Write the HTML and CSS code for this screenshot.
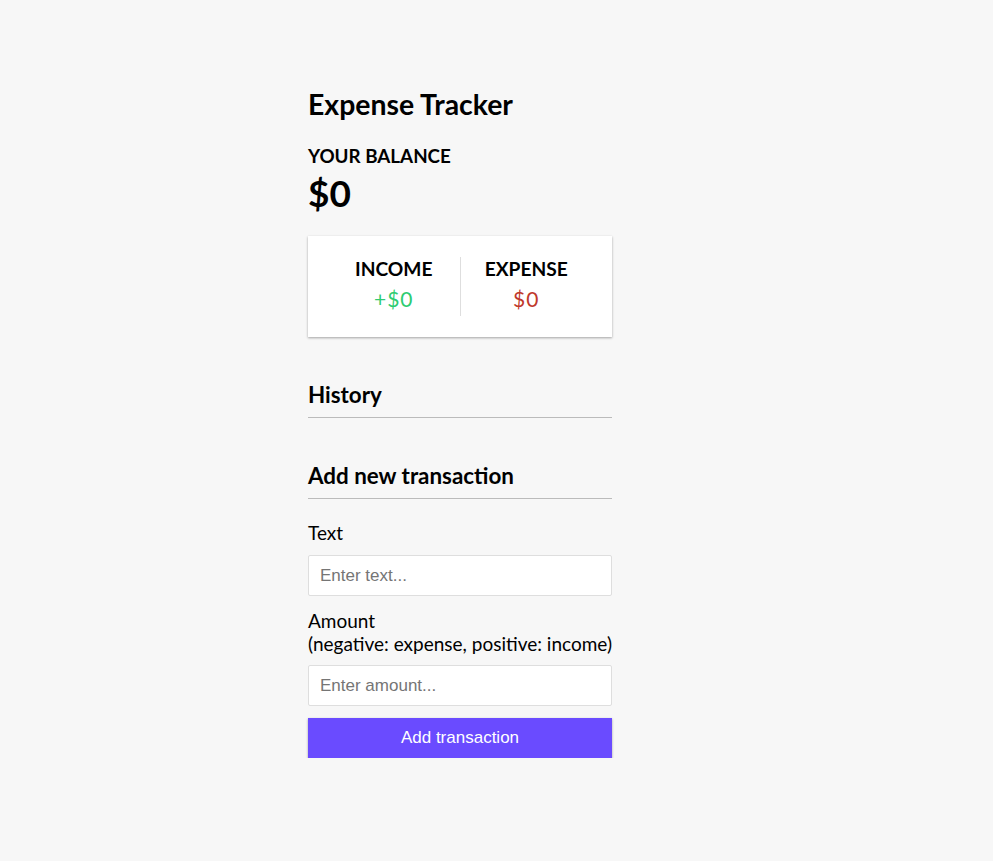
FILE: index.html
```html
<!DOCTYPE html>
<html lang="en">
<head>
<meta charset="UTF-8">
<title>Expense Tracker</title>
<link rel="stylesheet" href="styles.css">
</head>
<body>
  <div class="container">
    <h1 class="title">Expense Tracker</h1>
    <h4 class="balance-label">Your Balance</h4>
    <div class="balance">$0</div>

    <div class="inc-exp">
      <div class="inc-exp-col">
        <h4 class="col-label">Income</h4>
        <p class="money plus">+$0</p>
      </div>
      <div class="inc-exp-col">
        <h4 class="col-label">Expense</h4>
        <p class="money minus">$0</p>
      </div>
    </div>

    <h3 class="section-title">History</h3>
    <ul class="list"></ul>

    <h3 class="section-title">Add new transaction</h3>
    <form class="form">
      <label class="field-label label-text" for="text">Text</label>
      <input class="field-input" type="text" id="text" placeholder="Enter text...">
      <label class="field-label label-amount" for="amount">Amount <br>(negative: expense, positive: income)</label>
      <input class="field-input" type="number" id="amount" placeholder="Enter amount...">
      <button class="btn" type="button">Add transaction</button>
    </form>
  </div>
</body>
</html>
```
FILE: styles.css
```css
* {
  box-sizing: border-box;
}

body {
  margin: 0;
  background-color: #f7f7f7;
  font-family: "Lato", "Noto Sans", sans-serif;
  color: #000;
}

.container {
  width: 304px;
  margin-left: 308px;
  padding-top: 87px;
}

.title {
  margin: 0;
  font-size: 28.4px;
  line-height: 34px;
  font-weight: 700;
}

.balance-label {
  margin: 24px 0 0;
  font-size: 18.8px;
  line-height: 22px;
  text-transform: uppercase;
}

.balance {
  margin-top: 4px;
  font-size: 37px;
  line-height: 43px;
  font-weight: 700;
}

.inc-exp {
  display: flex;
  margin-top: 22px;
  height: 101px;
  padding: 21px 20px;
  background-color: #fff;
  box-shadow: 0 1px 3px rgba(0, 0, 0, 0.12), 0 1px 2px rgba(0, 0, 0, 0.24);
}

.inc-exp-col {
  flex: 1;
  text-align: center;
}

.inc-exp-col:first-child {
  border-right: 1px solid #dedede;
}

.col-label {
  margin: 0;
  font-size: 19.2px;
  line-height: 24px;
  text-transform: uppercase;
}

.money {
  margin: 5px 0 0;
  font-size: 21px;
  line-height: 25px;
  letter-spacing: 1px;
}

.money.plus {
  color: #2ecc71;
}

.money.minus {
  color: #c0392b;
}

.section-title {
  margin: 44px 0 0;
  padding-bottom: 9px;
  font-size: 22.4px;
  line-height: 27px;
  border-bottom: 1px solid #bbb;
}

.list {
  margin: 0;
  padding: 0;
  list-style: none;
}

.form {
  display: flex;
  flex-direction: column;
}

.field-label {
  display: block;
  font-size: 19px;
  line-height: 23px;
}

.label-text {
  margin: 22px 0 11px;
}

.label-amount {
  margin: 13px 0 10px;
}

.field-input {
  display: block;
  width: 100%;
  height: 41px;
  padding: 10px 11px;
  font-family: "Liberation Sans", Arial, sans-serif;
  font-size: 17px;
  border: 1px solid #dedede;
  border-radius: 2px;
  background: #fff;
  outline: none;
  -moz-appearance: textfield;
}

.field-input::-webkit-outer-spin-button,
.field-input::-webkit-inner-spin-button {
  -webkit-appearance: none;
  margin: 0;
}

.field-input::placeholder {
  color: #757575;
}

.btn {
  display: block;
  width: 100%;
  height: 40px;
  margin-top: 12px;
  padding: 0;
  border: 0;
  background-color: #6a4bff;
  color: #fff;
  font-family: "Liberation Sans", Arial, sans-serif;
  font-size: 17px;
  box-shadow: 0 1px 3px rgba(0, 0, 0, 0.12), 0 1px 2px rgba(0, 0, 0, 0.24);
  cursor: pointer;
}
```
